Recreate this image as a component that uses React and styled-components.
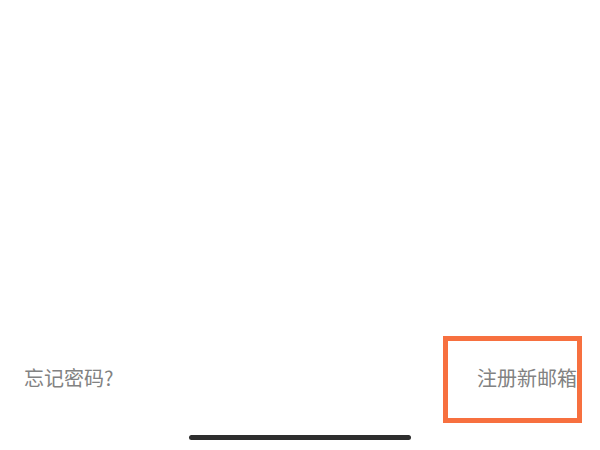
import React from "react";
import styled, { createGlobalStyle } from "styled-components";

const GlobalStyle = createGlobalStyle`
  html, body {
    margin: 0;
    padding: 0;
    background: #ffffff;
  }
  body {
    font-family: "Noto Sans CJK SC", "Noto Sans", sans-serif;
  }
`;

const Screen = styled.div`
  height: 450px;
  width: 600px;
  display: flex;
  flex-direction: column;
  justify-content: flex-end;
  background: #fff;
`;

const LinkRow = styled.div`
  display: flex;
  align-items: center;
  justify-content: space-between;
  padding: 0 18px 0 24px;
`;

const TextLink = styled.span`
  font-size: 20px;
  line-height: 20px;
  color: #828282;
  white-space: nowrap;
  margin-bottom: 4px;
`;

const Highlight = styled.div`
  box-sizing: border-box;
  width: 139px;
  height: 87px;
  border: 5px solid #f7703f;
  display: flex;
  align-items: center;
  justify-content: flex-end;
  overflow: hidden;
`;

const HomeBar = styled.div`
  align-self: center;
  width: 222px;
  height: 5px;
  border-radius: 3px;
  background: #2e2e2e;
  margin: 12px 0 10px;
`;

export default function App() {
  return (
    <>
      <GlobalStyle />
      <Screen>
        <LinkRow>
          <TextLink>忘记密码?</TextLink>
          <Highlight>
            <TextLink>注册新邮箱</TextLink>
          </Highlight>
        </LinkRow>
        <HomeBar />
      </Screen>
    </>
  );
}
